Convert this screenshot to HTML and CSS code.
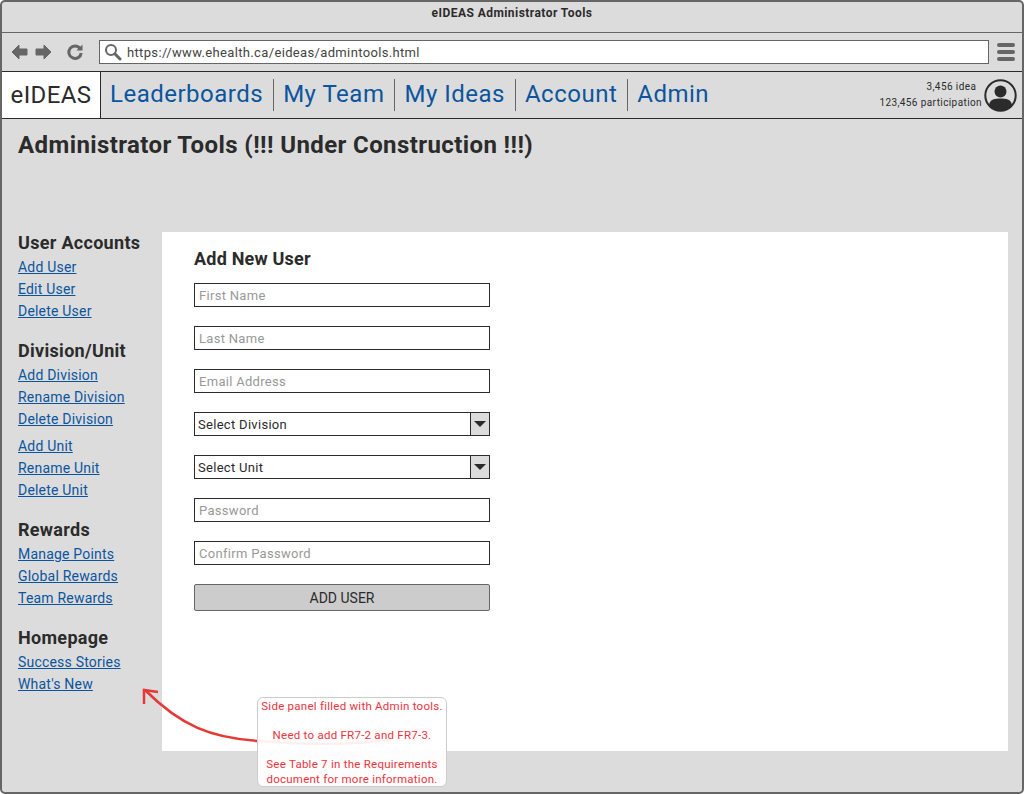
FILE: index.html
```html
<!DOCTYPE html>
<html lang="en">
<head>
  <meta charset="UTF-8">
  <title>eIDEAS Administrator Tools</title>
  <link rel="stylesheet" href="styles.css">
</head>
<body>
  <div class="window">
    <!-- Browser chrome -->
    <div class="titlebar">eIDEAS Administrator Tools</div>
    <div class="toolbar">
      <svg class="tool-icon" width="18" height="18" viewBox="0 0 18 18"><path d="M9 2 L2 9 L9 16 L9 12 L17 12 L17 6 L9 6 Z" fill="#666" stroke="#666" stroke-linejoin="round"/></svg>
      <svg class="tool-icon" width="18" height="18" viewBox="0 0 18 18"><path d="M9 2 L16 9 L9 16 L9 12 L1 12 L1 6 L9 6 Z" fill="#666" stroke="#666" stroke-linejoin="round"/></svg>
      <svg class="tool-icon reload" width="18" height="18" viewBox="0 0 18 18"><path d="M14 5.5 A6.2 6.2 0 1 0 15.2 10" fill="none" stroke="#666" stroke-width="3"/><path d="M10.5 7.5 L16.5 7.5 L16.5 1.5 Z" fill="#666"/></svg>
      <div class="urlbar">
        <svg width="18" height="18" viewBox="0 0 18 18"><circle cx="7" cy="7" r="5" fill="none" stroke="#666" stroke-width="2"/><path d="M10.8 10.8 L16 16" stroke="#666" stroke-width="3" stroke-linecap="round"/></svg>
        <span>https://www.ehealth.ca/eideas/admintools.html</span>
      </div>
      <div class="burger"><i></i><i></i><i></i></div>
    </div>

    <!-- Site navigation -->
    <header class="sitenav">
      <a class="brand" href="#">eIDEAS</a>
      <nav class="navlinks">
        <a href="#">Leaderboards</a>
        <a href="#">My Team</a>
        <a href="#">My Ideas</a>
        <a href="#">Account</a>
        <a href="#">Admin</a>
      </nav>
      <div class="stats">
        <div>3,456 idea&nbsp;&nbsp;</div>
        <div>123,456 participation</div>
      </div>
      <svg class="avatar" width="33" height="33" viewBox="0 0 33 33">
        <circle cx="16.5" cy="16.5" r="15.2" fill="#dcdcdc" stroke="#2b2b2b" stroke-width="2"/>
        <circle cx="16.5" cy="12.5" r="6" fill="#2b2b2b"/>
        <path d="M5 26 C6 20 11 19.5 16.5 19.5 C22 19.5 27 20 28 26 A15 15 0 0 1 5 26 Z" fill="#2b2b2b"/>
      </svg>
    </header>

    <main class="page">
      <h1>Administrator Tools (!!! Under Construction !!!)</h1>
      <div class="columns">
        <aside class="sidebar">
          <h3>User Accounts</h3>
          <a href="#">Add User</a>
          <a href="#">Edit User</a>
          <a href="#">Delete User</a>

          <h3>Division/Unit</h3>
          <a href="#">Add Division</a>
          <a href="#">Rename Division</a>
          <a href="#">Delete Division</a>
          <a class="group-start" href="#">Add Unit</a>
          <a href="#">Rename Unit</a>
          <a href="#">Delete Unit</a>

          <h3>Rewards</h3>
          <a href="#">Manage Points</a>
          <a href="#">Global Rewards</a>
          <a href="#">Team Rewards</a>

          <h3>Homepage</h3>
          <a href="#">Success Stories</a>
          <a href="#">What's New</a>
        </aside>

        <section class="panel">
          <h2>Add New User</h2>
          <form class="user-form">
            <input type="text" placeholder="First Name">
            <input type="text" placeholder="Last Name">
            <input type="text" placeholder="Email Address">
            <div class="select"><span>Select Division</span><b><i></i></b></div>
            <div class="select"><span>Select Unit</span><b><i></i></b></div>
            <input type="password" placeholder="Password">
            <input type="password" placeholder="Confirm Password">
            <button type="button">ADD USER</button>
          </form>
        </section>
      </div>
    </main>

    <!-- Annotation over the page -->
    <svg class="callout-arrow" width="400" height="80" viewBox="0 0 400 80">
      <path d="M4 4 C40 40 70 52 118 55 C180 60 210 58 250 54" fill="none" stroke="#e53935" stroke-width="2.5"/>
      <path d="M17 6 L3 4 L3 18" fill="none" stroke="#e53935" stroke-width="2.5"/>
    </svg>
    <div class="note">
      <p>Side panel filled with Admin tools.</p>
      <p>Need to add FR7-2 and FR7-3.</p>
      <p>See Table 7 in the Requirements document for more information.</p>
    </div>
  </div>
</body>
</html>
```

FILE: styles.css
```css
/* Global Styles */
* {
  box-sizing: border-box;
}
html, body {
  margin: 0;
  padding: 0;
  height: 794px;
  overflow: hidden;
}
body {
  font-family: Roboto, "Noto Sans", sans-serif;
  color: #2b2b2b;
}
.window {
  position: relative;
  width: 1024px;
  height: 794px;
  display: flex;
  flex-direction: column;
  background: #dcdcdc;
  border: 2px solid #666;
  border-radius: 5px;
  overflow: hidden;
}

/* Browser chrome */
.titlebar {
  height: 31px;
  padding-top: 4px;
  text-align: center;
  font-size: 12px;
  font-weight: 700;
  letter-spacing: 0.45px;
  border-bottom: 1px solid #666;
}
.toolbar {
  height: 38px;
  display: flex;
  align-items: center;
  padding-left: 8px;
  flex-shrink: 0;
}
.tool-icon {
  margin-right: 7px;
}
.reload {
  margin-left: 6px;
  margin-right: 15px;
}
.urlbar {
  width: 890px;
  height: 24px;
  display: flex;
  align-items: center;
  gap: 5px;
  padding-left: 4px;
  background: #fff;
  border: 1px solid #666;
  font-size: 13px;
  letter-spacing: 0.35px;
  color: #444;
}
.burger {
  margin-left: 8px;
  width: 18px;
  display: flex;
  flex-direction: column;
  gap: 3px;
}
.burger i {
  height: 4px;
  border-radius: 2px;
  background: #666;
}

/* Site navigation */
.sitenav {
  height: 48px;
  display: flex;
  align-items: center;
  border-top: 1px solid #2b2b2b;
  border-bottom: 1px solid #2b2b2b;
  padding-right: 5px;
  flex-shrink: 0;
}
.brand {
  width: 100px;
  height: 100%;
  margin-left: -1px;
  display: flex;
  align-items: center;
  justify-content: center;
  background: #fff;
  border-right: 1px solid #2b2b2b;
  border-left: 1px solid #2b2b2b;
  font-size: 24px;
  letter-spacing: 0.4px;
  color: #2b2b2b;
  text-decoration: none;
}
.navlinks {
  display: flex;
  flex: 1;
}
.navlinks a {
  padding: 0 10px 0 9px;
  height: 32px;
  line-height: 30px;
  font-size: 24px;
  letter-spacing: 0.5px;
  color: #0b559f;
  text-decoration: none;
  border-left: 1px solid #666;
}
.navlinks a:first-child {
  border-left: 0;
}
.stats {
  text-align: right;
  font-size: 10px;
  line-height: 16px;
  letter-spacing: 0.4px;
  margin-right: 2px;
}

/* Page */
.page {
  flex: 1;
  padding: 0 14px 0 16px;
}
.page h1 {
  margin: 0;
  padding-top: 11px;
  height: 113px;
  font-size: 24px;
  line-height: 30px;
  font-weight: 700;
  letter-spacing: 0.4px;
}
.columns {
  display: flex;
  height: 519px;
}
.sidebar {
  width: 144px;
  flex-shrink: 0;
}
.sidebar h3 {
  margin: 18px 0 0;
  font-size: 18px;
  line-height: 22px;
  font-weight: 700;
  letter-spacing: 0.3px;
}
.sidebar h3:first-child {
  margin-top: 0;
}
.sidebar a {
  display: block;
  height: 22px;
  line-height: 22px;
  font-size: 14px;
  letter-spacing: 0.2px;
  color: #0b559f;
}
.sidebar h3 + a {
  margin-top: 2px;
}
.sidebar a.group-start {
  margin-top: 5px;
}
.panel {
  flex: 1;
  background: #fff;
  padding: 16px 32px;
}
.panel h2 {
  margin: 0 0 13px;
  font-size: 18px;
  line-height: 22px;
  font-weight: 700;
  letter-spacing: 0.2px;
}
.user-form {
  width: 296px;
  display: flex;
  flex-direction: column;
  gap: 19px;
}
.user-form input {
  height: 24px;
  padding: 0 4px;
  border: 1px solid #2b2b2b;
  border-radius: 0;
  font-family: inherit;
  font-size: 13px;
  letter-spacing: 0.3px;
  outline: 0;
}
.user-form input::placeholder {
  color: #999;
}
.select {
  height: 24px;
  display: flex;
  align-items: center;
  justify-content: space-between;
  padding-left: 3px;
  background: #fff;
  border: 1px solid #2b2b2b;
  font-size: 13px;
  letter-spacing: 0.3px;
}
.select b {
  width: 19px;
  height: 100%;
  display: flex;
  align-items: center;
  justify-content: center;
  background: #dcdcdc;
  border-left: 1px solid #2b2b2b;
}
.select i {
  width: 0;
  height: 0;
  border-left: 6px solid transparent;
  border-right: 6px solid transparent;
  border-top: 6px solid #2b2b2b;
}
.user-form button {
  height: 27px;
  background: #ccc;
  border: 1px solid #666;
  border-radius: 2px;
  font-family: inherit;
  font-size: 14px;
  color: #2b2b2b;
}

/* Annotation */
.callout-arrow {
  position: absolute;
  left: 139px;
  top: 684px;
}
.note {
  position: absolute;
  left: 255px;
  top: 695px;
  width: 190px;
  height: 90px;
  padding: 1px 2px;
  background: rgba(255, 255, 255, 0.93);
  border: 1px solid #ccc;
  border-radius: 6px;
  text-align: center;
  font-size: 11.5px;
  line-height: 14.5px;
  letter-spacing: 0.25px;
  color: #ee3340;
}
.note p {
  margin: 0 0 14.5px;
}
```
